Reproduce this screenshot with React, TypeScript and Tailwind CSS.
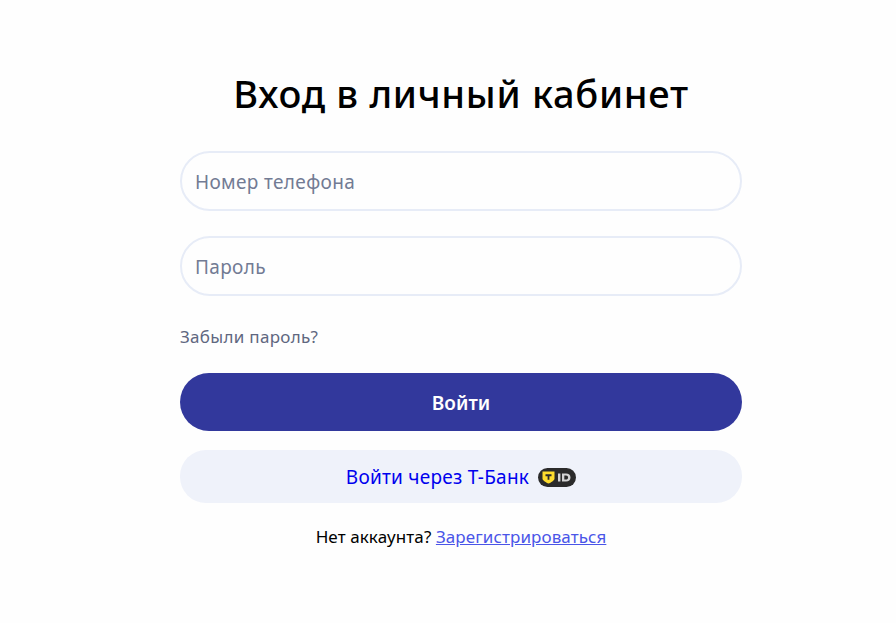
export default function App() {
  return (
    <div className="min-h-[623px] bg-[#fefefe] pl-[180px] font-['Noto_Sans',sans-serif]">
      <form className="w-[562px] flex flex-col pt-[66px]" onSubmit={(e) => e.preventDefault()}>
        <h1 className="text-[38px] leading-[54px] tracking-[0.7px] font-medium text-black text-center mb-[31px]">
          Вход в личный кабинет
        </h1>

        <input
          placeholder="Номер телефона"
          className="h-[60px] rounded-[30px] border-2 border-[#e7ecf7] px-[13px] pt-[2px] text-[19px] tracking-[0.35px] text-[#727b94] placeholder:text-[#727b94] outline-none mb-[25px]"
        />
        <input
          type="text"
          placeholder="Пароль"
          className="h-[60px] rounded-[30px] border-2 border-[#e7ecf7] px-[13px] pt-[2px] text-[19px] tracking-[0.35px] text-[#727b94] placeholder:text-[#727b94] outline-none mb-[31px]"
        />

        <a className="text-[17px] leading-[20px] tracking-[0.3px] text-[#5f6780] mb-[26px]">Забыли пароль?</a>

        <button className="h-[58px] pt-[2px] rounded-[29px] bg-[#32389c] text-white text-[19px] font-semibold mb-[19px]">
          Войти
        </button>

        <button className="h-[53px] pt-[2px] rounded-[26px] bg-[#eff2fa] text-[#0000ee] text-[19px] tracking-[0.25px] flex items-center justify-center gap-[9px]">
          Войти через Т-Банк
          <svg width="38" height="19" viewBox="0 0 38 19">
            <rect width="38" height="19" rx="9.5" fill="#2b2b2b" />
            <path d="M4.500 3.500h12v7.200c0 1.800-3.800 3.800-6 4.800-2.200-1-6-3-6-4.800z" fill="#ffdd2d" />
            <path d="M7.500 6.300h6v1.900h-2.100v3.500h-1.800V8.200H7.500z" fill="#2b2b2b" />
            <path d="M20 5.500h2.400v8H20zM24 5.500h4c2.800 0 4.500 1.600 4.500 4s-1.700 4-4.500 4h-4zM26.300 7.400v4.200h1.700c1.300 0 2.100-.8 2.100-2.100s-.8-2.100-2.100-2.100z" fill="#d4d4d4" />
          </svg>
        </button>

        <p className="text-[17px] leading-[20px] tracking-[0.1px] text-black text-center mt-[24px]">
          Нет аккаунта? <a href="#" className="text-[#4a55e8] underline">Зарегистрироваться</a>
        </p>
      </form>
    </div>
  );
}
